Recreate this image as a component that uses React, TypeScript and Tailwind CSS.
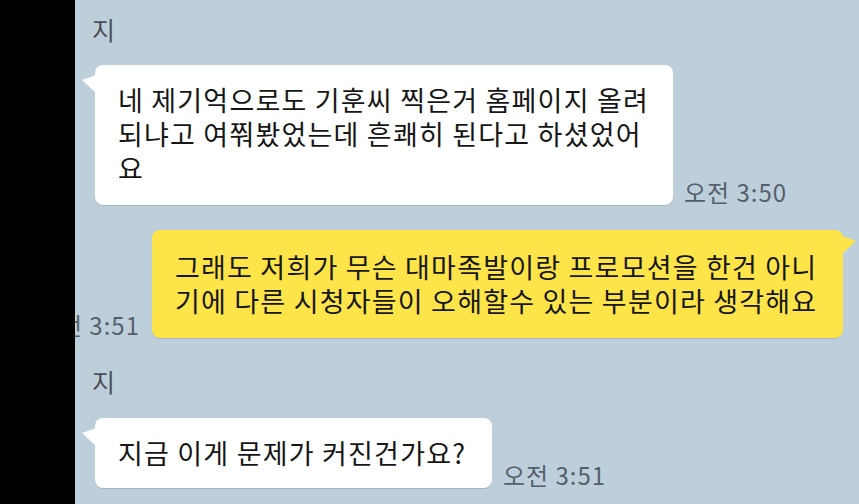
import React from "react";

const font = { fontFamily: '"Noto Sans CJK KR", "Noto Sans", sans-serif' };

function LeftTail() {
  return (
    <svg className="absolute left-[-13px] top-[8px]" width="14" height="22" viewBox="0 0 14 22">
      <polygon points="14,2 0,7 14,20" fill="#ffffff" />
    </svg>
  );
}

function RightTail() {
  return (
    <svg className="absolute right-[-13px] top-[4px]" width="14" height="22" viewBox="0 0 14 22">
      <polygon points="0,2 14,7 0,20" fill="#fde449" />
    </svg>
  );
}

function Time({ children }: { children: React.ReactNode }) {
  return (
    <span className="mb-[-2px] whitespace-nowrap text-[24px] leading-[30px] tracking-[1px] text-[#56606b]">
      {children}
    </span>
  );
}

export default function App() {
  return (
    <div className="flex h-[504px] w-[859px] overflow-hidden bg-[#becfdc]" style={font}>
      <div className="relative z-10 w-[75px] shrink-0 bg-black" />
      <div className="flex min-w-0 flex-1 flex-col pl-[20px] pr-[16px] pt-[14px]">
        <p className="ml-[-3px] text-[25px] leading-[30px] text-[#4b5057]">지</p>

        <div className="mt-[21px] flex items-end gap-[11px]">
          <div className="relative h-[140px] w-[578px] shrink-0 rounded-[8px] bg-white px-[23px] py-[18px] text-[27px] leading-[34px] tracking-[1.2px] text-[#161616] shadow-[0_1px_0_rgba(0,0,0,0.13)]">
            <LeftTail />
            네 제기억으로도 기훈씨 찍은거 홈페이지 올려
            <br />
            되냐고 여쭤봤었는데 흔쾌히 된다고 하셨었어
            <br />요
          </div>
          <Time>오전 3:50</Time>
        </div>

        <div className="mt-[25px] flex items-end justify-end gap-[12px]">
          <Time>오전 3:51</Time>
          <div className="relative h-[108px] w-[691px] shrink-0 rounded-[8px] bg-[#fde449] px-[23px] py-[20px] text-[27px] leading-[34px] tracking-[1.2px] text-[#161616] shadow-[0_1px_0_rgba(0,0,0,0.1)]">
            <RightTail />
            그래도 저희가 무슨 대마족발이랑 프로모션을 한건 아니
            <br />
            기에 다른 시청자들이 오해할수 있는 부분이라 생각해요
          </div>
        </div>

        <p className="mt-[28px] ml-[-3px] text-[25px] leading-[30px] text-[#4b5057]">지</p>

        <div className="mt-[22px] flex items-end gap-[11px]">
          <div className="relative h-[70px] w-[397px] shrink-0 rounded-[8px] bg-white px-[23px] py-[18px] text-[27px] leading-[34px] tracking-[1.2px] text-[#161616] shadow-[0_1px_0_rgba(0,0,0,0.13)]">
            <LeftTail />
            지금 이게 문제가 커진건가요?
          </div>
          <Time>오전 3:51</Time>
        </div>
      </div>
    </div>
  );
}
